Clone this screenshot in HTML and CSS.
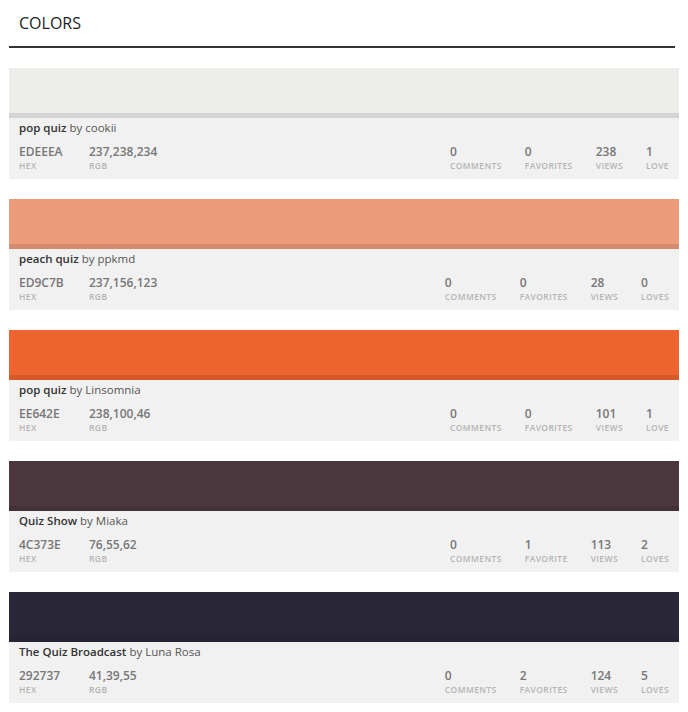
FILE: index.html
```html
<!DOCTYPE html>
<html>
<head>
<meta charset="utf-8">
<link rel="stylesheet" href="styles.css">
</head>
<body>
<div class="page">
  <h1 class="heading">COLORS</h1>

  <div class="card">
    <div class="swatch" style="background:#EDEEEA"></div>
    <div class="info">
      <div class="title"><b>pop quiz</b> by cookii</div>
      <div class="row">
        <div class="codes">
          <div class="stat hex"><span class="val">EDEEEA</span><span class="lab">HEX</span></div>
          <div class="stat"><span class="val">237,238,234</span><span class="lab">RGB</span></div>
        </div>
        <div class="counts">
          <div class="stat"><span class="val">0</span><span class="lab">COMMENTS</span></div>
          <div class="stat"><span class="val">0</span><span class="lab">FAVORITES</span></div>
          <div class="stat"><span class="val">238</span><span class="lab">VIEWS</span></div>
          <div class="stat"><span class="val">1</span><span class="lab">LOVE</span></div>
        </div>
      </div>
    </div>
  </div>

  <div class="card">
    <div class="swatch" style="background:#ED9C7B"></div>
    <div class="info">
      <div class="title"><b>peach quiz</b> by ppkmd</div>
      <div class="row">
        <div class="codes">
          <div class="stat hex"><span class="val">ED9C7B</span><span class="lab">HEX</span></div>
          <div class="stat"><span class="val">237,156,123</span><span class="lab">RGB</span></div>
        </div>
        <div class="counts">
          <div class="stat"><span class="val">0</span><span class="lab">COMMENTS</span></div>
          <div class="stat"><span class="val">0</span><span class="lab">FAVORITES</span></div>
          <div class="stat"><span class="val">28</span><span class="lab">VIEWS</span></div>
          <div class="stat"><span class="val">0</span><span class="lab">LOVES</span></div>
        </div>
      </div>
    </div>
  </div>

  <div class="card">
    <div class="swatch" style="background:#EE642E"></div>
    <div class="info">
      <div class="title"><b>pop quiz</b> by Linsomnia</div>
      <div class="row">
        <div class="codes">
          <div class="stat hex"><span class="val">EE642E</span><span class="lab">HEX</span></div>
          <div class="stat"><span class="val">238,100,46</span><span class="lab">RGB</span></div>
        </div>
        <div class="counts">
          <div class="stat"><span class="val">0</span><span class="lab">COMMENTS</span></div>
          <div class="stat"><span class="val">0</span><span class="lab">FAVORITES</span></div>
          <div class="stat"><span class="val">101</span><span class="lab">VIEWS</span></div>
          <div class="stat"><span class="val">1</span><span class="lab">LOVE</span></div>
        </div>
      </div>
    </div>
  </div>

  <div class="card">
    <div class="swatch" style="background:#4C373E"></div>
    <div class="info">
      <div class="title"><b>Quiz Show</b> by Miaka</div>
      <div class="row">
        <div class="codes">
          <div class="stat hex"><span class="val">4C373E</span><span class="lab">HEX</span></div>
          <div class="stat"><span class="val">76,55,62</span><span class="lab">RGB</span></div>
        </div>
        <div class="counts">
          <div class="stat"><span class="val">0</span><span class="lab">COMMENTS</span></div>
          <div class="stat"><span class="val">1</span><span class="lab">FAVORITE</span></div>
          <div class="stat"><span class="val">113</span><span class="lab">VIEWS</span></div>
          <div class="stat"><span class="val">2</span><span class="lab">LOVES</span></div>
        </div>
      </div>
    </div>
  </div>

  <div class="card">
    <div class="swatch" style="background:#292737"></div>
    <div class="info">
      <div class="title"><b>The Quiz Broadcast</b> by Luna Rosa</div>
      <div class="row">
        <div class="codes">
          <div class="stat hex"><span class="val">292737</span><span class="lab">HEX</span></div>
          <div class="stat"><span class="val">41,39,55</span><span class="lab">RGB</span></div>
        </div>
        <div class="counts">
          <div class="stat"><span class="val">0</span><span class="lab">COMMENTS</span></div>
          <div class="stat"><span class="val">2</span><span class="lab">FAVORITES</span></div>
          <div class="stat"><span class="val">124</span><span class="lab">VIEWS</span></div>
          <div class="stat"><span class="val">5</span><span class="lab">LOVES</span></div>
        </div>
      </div>
    </div>
  </div>
</div>
</body>
</html>
```

FILE: styles.css
```css
* { box-sizing: border-box; }
html, body { margin: 0; padding: 0; background: #fff; }
body {
  font-family: "Open Sans", "Noto Sans", sans-serif;
  color: #333;
}
.page { padding: 0 9px; }
.heading {
  margin: 0 4px 20px 0;
  padding: 13px 0 0 10px;
  height: 48px;
  font-size: 16px;
  line-height: 20px;
  font-weight: 500;
  color: #222;
  border-bottom: 2px solid #333;
}
.card { margin-bottom: 20px; }
.swatch {
  height: 50px;
  border-bottom: 5px solid rgba(0, 0, 0, 0.1);
}
.info {
  background: #f1f1f1;
  height: 61px;
  padding: 2px 10px 0 10px;
}
.title {
  font-size: 11.5px;
  line-height: 15px;
  color: #555;
}
.title b { font-weight: 600; color: #333; }
.row {
  display: flex;
  justify-content: space-between;
  margin-top: 10px;
}
.codes, .counts { display: flex; }
.counts { gap: 23px; }
.stat { display: flex; flex-direction: column; }
.hex { width: 70px; }
.val {
  font-size: 12px;
  line-height: 14px;
  font-weight: 600;
  color: #777;
}
.lab {
  margin-top: 2px;
  font-size: 8.5px;
  line-height: 10px;
  font-weight: 600;
  letter-spacing: 0.4px;
  color: #b4b4b4;
}
```
